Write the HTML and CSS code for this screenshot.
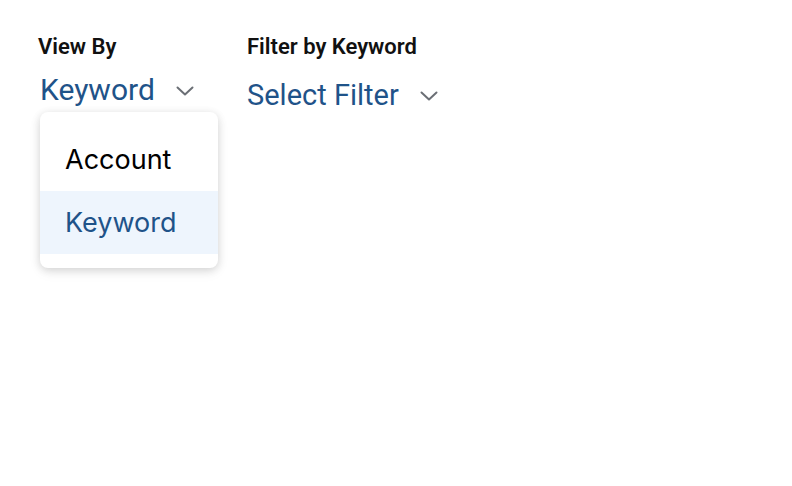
FILE: index.html
```html
<!DOCTYPE html>
<html>
<head>
<meta charset="utf-8">
<link rel="stylesheet" href="styles.css">
</head>
<body>
<div class="bar">
  <div class="field field-view">
    <div class="label">View By</div>
    <div class="select">
      <span class="value">Keyword</span>
      <svg class="chev" width="18" height="10" viewBox="0 0 18 10"><path d="M1.5 1.5 L9 8.5 L16.5 1.5" fill="none" stroke="#6b6f75" stroke-width="2" stroke-linecap="round" stroke-linejoin="round"/></svg>
    </div>
    <div class="menu">
      <div class="item">Account</div>
      <div class="item active">Keyword</div>
    </div>
  </div>
  <div class="field field-filter">
    <div class="label">Filter by Keyword</div>
    <div class="select select-filter">
      <span class="value">Select Filter</span>
      <svg class="chev" width="18" height="10" viewBox="0 0 18 10"><path d="M1.5 1.5 L9 8.5 L16.5 1.5" fill="none" stroke="#6b6f75" stroke-width="2" stroke-linecap="round" stroke-linejoin="round"/></svg>
    </div>
  </div>
</div>
</body>
</html>
```
FILE: styles.css
```css
html, body { margin: 0; padding: 0; background: #fff; }
html, body { min-height: 486px; }
body { font-family: Roboto, "Noto Sans", sans-serif; }
.bar { display: flex; padding: 32px 0 0 38px; }
.field { position: relative; }
.field-view { width: 209px; }
.label { font-size: 22px; font-weight: 600; color: #111; line-height: 30px; }
.select { display: flex; align-items: center; margin-top: 10px; padding-left: 2px; }
.select-filter { margin-top: 15px; padding-left: 0; }
.value { font-size: 30px; color: #1f5389; line-height: 36px; }
.select-filter .value { font-size: 29px; }
.chev { margin-left: 21px; margin-top: 2px; }
.menu {
  position: absolute; left: 2px; top: 80px; width: 178px;
  background: #fff; border-radius: 8px;
  box-shadow: 0 2px 8px rgba(0,0,0,0.14), 0 4px 14px rgba(0,0,0,0.06);
  padding: 16px 0 14px;
  font-family: Inter, Roboto, sans-serif;
}
.item { height: 63px; line-height: 63px; padding-left: 25px; font-size: 27px; color: #000; }
.item.active { background: #eef5fd; color: #1f5389; }
```
